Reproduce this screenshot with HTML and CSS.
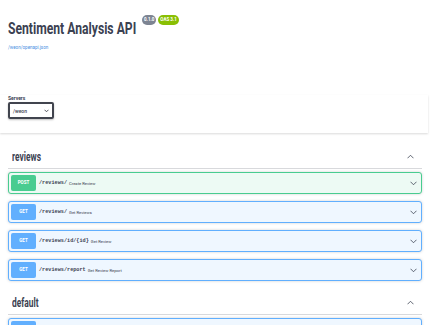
FILE: index.html
```html
<!DOCTYPE html>
<html lang="en">

<head>
  <meta charset="UTF-8">
  <title>Sentiment Analysis API</title>
  <link rel="stylesheet" href="styles.css">
</head>

<body>
  <div class="wrapper info">
    <div class="title-row">
      <h2 class="title"><span>Sentiment Analysis API</span></h2>
      <span class="badge version">0.1.0</span>
      <span class="badge oas">OAS 3.1</span>
    </div>
    <a class="spec-link" href="#">/weon/openapi.json</a>
  </div>

  <div class="scheme-container">
    <div class="wrapper">
      <div class="servers-label">Servers</div>
      <div class="servers-select">
        <span>/weon</span>
        <svg width="5" height="4" viewBox="0 0 10 7"><path d="M1 1l4 4 4-4" fill="none" stroke="#41444e" stroke-width="1.8"/></svg>
      </div>
    </div>
  </div>

  <div class="wrapper">
    <div class="tag">
      <h3><span>reviews</span></h3>
      <svg class="arrow" width="7" height="5" viewBox="0 0 14 9"><path d="M1 8l6-6 6 6" fill="none" stroke="#3b4151" stroke-width="1.6"/></svg>
    </div>
    <div class="opblock post">
      <span class="method">POST</span>
      <span class="path">/reviews/</span>
      <span class="summary">Create Review</span>
      <svg class="chev" width="7" height="5" viewBox="0 0 14 9"><path d="M1 1l6 6 6-6" fill="none" stroke="#3b4151" stroke-width="1.6"/></svg>
    </div>
    <div class="opblock get">
      <span class="method">GET</span>
      <span class="path">/reviews/</span>
      <span class="summary">Get Reviews</span>
      <svg class="chev" width="7" height="5" viewBox="0 0 14 9"><path d="M1 1l6 6 6-6" fill="none" stroke="#3b4151" stroke-width="1.6"/></svg>
    </div>
    <div class="opblock get">
      <span class="method">GET</span>
      <span class="path">/reviews/id/{id}</span>
      <span class="summary">Get Review</span>
      <svg class="chev" width="7" height="5" viewBox="0 0 14 9"><path d="M1 1l6 6 6-6" fill="none" stroke="#3b4151" stroke-width="1.6"/></svg>
    </div>
    <div class="opblock get">
      <span class="method">GET</span>
      <span class="path">/reviews/report</span>
      <span class="summary">Get Review Report</span>
      <svg class="chev" width="7" height="5" viewBox="0 0 14 9"><path d="M1 1l6 6 6-6" fill="none" stroke="#3b4151" stroke-width="1.6"/></svg>
    </div>

    <div class="tag second">
      <h3><span>default</span></h3>
      <svg class="arrow" width="7" height="5" viewBox="0 0 14 9"><path d="M1 8l6-6 6 6" fill="none" stroke="#3b4151" stroke-width="1.6"/></svg>
    </div>
    <div class="opblock get">
      <span class="method">GET</span>
      <span class="path">/</span>
      <span class="summary">Root</span>
      <svg class="chev" width="7" height="5" viewBox="0 0 14 9"><path d="M1 1l6 6 6-6" fill="none" stroke="#3b4151" stroke-width="1.6"/></svg>
    </div>
  </div>
</body>

</html>
```

FILE: styles.css
```css
body {
  margin: 0;
  background: #fff;
  color: #3b4151;
  font-family: Roboto, "Open Sans", sans-serif;
}

.wrapper {
  padding: 0 9px 0 8px;
}

/* Info block */
.info {
  padding-top: 15px;
  height: 80px;
}

.title-row {
  display: flex;
  align-items: flex-start;
  gap: 2px;
}

/* the original face is a narrow one, so the heading is squeezed */
.title {
  width: 132px;
  margin: 4px 0 0 0;
  font-size: 16px;
  line-height: 20px;
  font-weight: 700;
  white-space: nowrap;
  color: #3b4151;
}

.title span,
.tag h3 span {
  display: inline-block;
  transform-origin: left center;
}

.title span {
  transform: scaleX(0.76);
}

.badge {
  padding: 0 2px;
  border-radius: 5px;
  font-size: 4.5px;
  line-height: 10px;
  font-weight: 700;
  color: #fff;
}

.version {
  background: #7d8492;
}

.oas {
  background: #89bf04;
}

.spec-link {
  display: block;
  margin-top: 6px;
  font-size: 4.5px;
  color: #4990e2;
  text-decoration: none;
}

/* Servers */
.scheme-container {
  padding: 0 0 14px 0;
  margin-right: 3px;
  box-shadow: 0 1px 2px 0 rgba(0, 0, 0, 0.15);
  margin-bottom: 12px;
}

.servers-label {
  font-size: 5px;
  font-weight: 700;
  margin-bottom: 1px;
}

.servers-select {
  display: flex;
  align-items: center;
  justify-content: space-between;
  box-sizing: border-box;
  width: 46px;
  height: 17px;
  padding: 0 3px;
  border: 2px solid #41444e;
  border-radius: 2px;
  box-shadow: 0 1px 2px 0 rgba(0, 0, 0, 0.25);
  font-size: 5px;
  font-weight: 500;
}

/* Tags */
.tag {
  display: flex;
  align-items: center;
  justify-content: space-between;
  height: 23px;
  padding: 0 8px 0 4px;
  border-bottom: 1px solid rgba(59, 65, 81, 0.2);
  margin-bottom: 3px;
}

.tag.second {
  margin-top: 10px;
}

.tag h3 {
  margin: 0;
  font-size: 12px;
  font-weight: 700;
}

.tag h3 span {
  transform: scaleX(0.7);
}

/* Operations */
.opblock {
  display: flex;
  align-items: center;
  box-sizing: border-box;
  height: 22px;
  padding: 0 4px 0 2px;
  margin-bottom: 7px;
  border: 1px solid;
  border-radius: 3px;
  box-shadow: 0 0 3px rgba(0, 0, 0, 0.19);
}

.opblock.post {
  background: #edfaf4;
  border-color: #49cc90;
}

.opblock.get {
  background: #eff7ff;
  border-color: #61affe;
}

.method {
  width: 25px;
  height: 16px;
  line-height: 16px;
  border-radius: 2px;
  text-align: center;
  color: #fff;
  font-size: 4.5px;
  font-weight: 700;
}

.post .method {
  background: #49cc90;
}

.get .method {
  background: #61affe;
}

.path {
  margin-left: 3px;
  font-family: "Liberation Mono", monospace;
  font-size: 5.2px;
  font-weight: 700;
}

.summary {
  margin-left: 2px;
  font-size: 4.2px;
  flex: 1;
}
```
